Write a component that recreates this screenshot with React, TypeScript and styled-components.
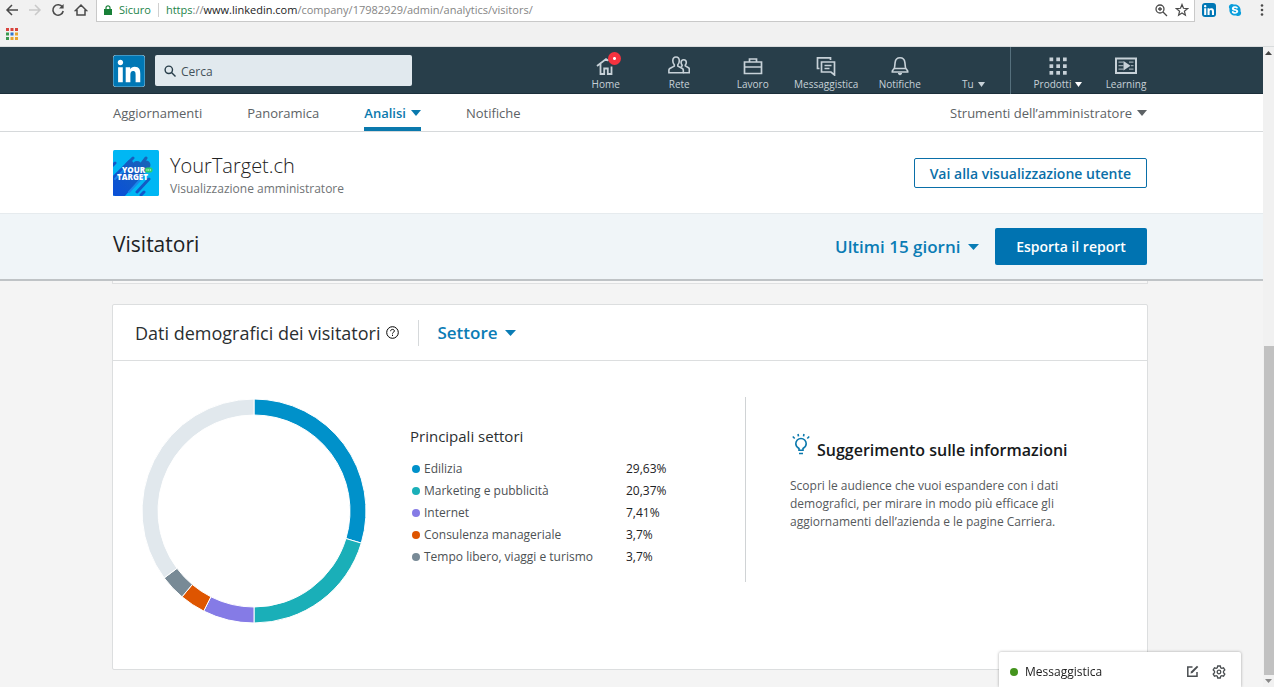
import React from "react";
import styled, { createGlobalStyle } from "styled-components";
import { FaLinkedin, FaSkype } from "react-icons/fa";

const GlobalStyle = createGlobalStyle`
  *, *::before, *::after { box-sizing: border-box; }
  html, body { margin: 0; background: #f4f4f4; }
  body, button, input, select { font-family: "Open Sans", "Noto Sans", sans-serif; }
  button, select { border: 0; background: none; padding: 0; cursor: pointer; }
  a { text-decoration: none; color: inherit; }
  h1, h2, h3, p { margin: 0; font-weight: 400; }
  svg { display: block; flex: none; }
`;

const Screen = styled.div`
  min-height: 100vh;
  display: flex;
  flex-direction: column;
`;

/* Browser chrome */
const Chrome = styled.div`
  background: #f1f1f1;
  height: 47px;
  border-bottom: 1px solid #d9dcdd;
`;
const ToolRow = styled.div`
  display: flex;
  align-items: stretch;
  height: 22px;
`;
const ToolButtons = styled.div`
  display: flex;
  align-items: center;
  gap: 9px;
  padding: 0 8px 2px 5px;
`;
const ToolButton = styled.button<{ $dim?: boolean }>`
  display: flex;
  color: ${(p) => (p.$dim ? "#c9c9c9" : "#4a4a4a")};
`;
const AddressBar = styled.div`
  flex: 1;
  display: flex;
  align-items: center;
  gap: 7px;
  padding: 0 5px 2px 7px;
  background: #fff;
  border: solid #c9c9c9;
  border-width: 0 1px 1px;
  font-size: 11px;
`;
const Secure = styled.span`
  color: #1e8449;
  padding-right: 7px;
  border-right: 1px solid #d0d0d0;
  line-height: 14px;
`;
const Url = styled.div`
  flex: 1;
  color: #858585;
  white-space: nowrap;
  i { font-style: normal; color: #1e8449; }
  b { font-weight: 400; color: #222; }
`;
const AddressTools = styled.div`
  display: flex;
  gap: 7px;
`;
const Extensions = styled.div`
  display: flex;
  align-items: center;
  gap: 12px;
  padding: 0 6px 2px 7px;
`;
const Bookmarks = styled.div`
  padding: 6px;
`;

/* Logo tile whose cut-out letters show the white ground */
const LogoTile = styled.a<{ $size: number }>`
  display: flex;
  align-items: center;
  justify-content: center;
  width: ${(p) => p.$size}px;
  height: ${(p) => p.$size}px;
  border-radius: 3px;
  overflow: hidden;
  background: #fff;
  color: #0077b5;
  svg {
    width: ${(p) => p.$size}px;
    height: ${(p) => p.$size + 4}px;
  }
`;
const SkypeTile = styled.span`
  display: flex;
  color: #0a9edc;
  background: radial-gradient(circle, #fff 5px, transparent 5px);
`;

const Viewport = styled.div`
  flex: 1;
  display: flex;
`;
const Page = styled.div`
  flex: 1;
  min-width: 0;
`;
const Scrollbar = styled.div`
  width: 11px;
  background: #f1f1f1;
  display: flex;
  flex-direction: column;
  align-items: center;
`;
const ScrollArrow = styled.span`
  display: flex;
  align-items: center;
  height: 12px;
`;
const ScrollSpace = styled.div`
  flex: 287;
`;
const ScrollThumb = styled.div`
  flex: 329;
  width: 10px;
  align-self: flex-end;
  background: #c1c1c1;
`;

const Row = styled.div`
  display: flex;
  align-items: center;
  padding: 0 116px 0 113px;
`;

/* Global navigation */
const GlobalNav = styled(Row).attrs({ as: "header" })`
  height: 47px;
  background: #283e4a;
  gap: 10px;
  box-shadow: inset 0 -1px #1b2f3a;
`;
const Search = styled.label`
  display: flex;
  align-items: center;
  gap: 5px;
  width: 257px;
  height: 31px;
  padding: 0 9px;
  border-radius: 2px;
  background: #e1e9ee;
  color: #283e4a;
  input {
    flex: 1;
    min-width: 0;
    border: 0;
    padding: 2px 0 0;
    background: none;
    outline: none;
    font-size: 12px;
    color: #44525b;
  }
  input::placeholder { color: #44525b; opacity: 1; }
`;
const NavMenu = styled.nav`
  margin-left: auto;
  align-self: stretch;
  display: flex;
`;
const NavMain = styled.div`
  width: 442px;
  display: grid;
  grid-template-columns: repeat(6, 1fr);
  border-right: 1px solid #56707d;
`;
const NavExtra = styled.div`
  display: grid;
  grid-template-columns: 94px 42px;
`;
const NavItem = styled.a`
  position: relative;
  display: flex;
  flex-direction: column;
  align-items: center;
  justify-content: flex-end;
  padding-bottom: 2px;
  color: #c7d1d8;
  font-size: 10px;
  line-height: 16px;
  white-space: nowrap;
`;
const Label = styled.span`
  display: flex;
  align-items: center;
  gap: 4px;
`;
const Badge = styled.span`
  position: absolute;
  top: 5px;
  left: 39px;
  width: 13px;
  height: 13px;
  border-radius: 50%;
  background: radial-gradient(circle, #fff 1px, #f5333f 2px);
`;

/* Company tabs */
const TabRow = styled(Row)`
  height: 38px;
  background: #fff;
  border-bottom: 1px solid #d6d9db;
  gap: 45px;
  align-items: stretch;
`;
const Tab = styled.button<{ $active?: boolean }>`
  display: flex;
  align-items: center;
  gap: 5px;
  font-size: 13px;
  color: ${(p) => (p.$active ? "#0a79ad" : "#5d6265")};
  font-weight: ${(p) => (p.$active ? 600 : 400)};
  border: solid ${(p) => (p.$active ? "#0a79ad" : "transparent")};
  border-width: 0 0 4px;
  padding-top: 5px;
  &:last-child { margin-left: auto; }
`;

const Company = styled(Row)`
  height: 81px;
  background: #fff;
  gap: 11px;
`;
const CompanyText = styled.div`
  padding-top: 4px;
`;
const CompanyName = styled.h1`
  font-size: 20px;
  line-height: 28px;
  font-weight: 300;
  color: #222;
`;
const CompanyRole = styled.p`
  font-size: 12px;
  line-height: 18px;
  color: #6f7375;
`;
const OutlineButton = styled.button`
  margin-left: auto;
  height: 30px;
  padding: 1px 15px 0;
  border: 1px solid #0a6fa8;
  border-radius: 2px;
  color: #0a6fa8;
  font-size: 14px;
  font-weight: 600;
`;

const ReportBar = styled(Row)`
  height: 68px;
  background: #f0f5f8;
  border-top: 1px solid #e6ebee;
  border-bottom: 2px solid #bfc3c6;
  gap: 16px;
`;
const ReportTitle = styled.h2`
  font-size: 21px;
  line-height: 28px;
  color: #1d2225;
  margin-right: auto;
  padding-bottom: 6px;
`;
const PickerBox = styled.label`
  display: flex;
  align-items: center;
  gap: 7px;
  color: #0a7cb5;
  select {
    appearance: none;
    color: inherit;
    font-size: 17px;
    font-weight: 600;
    line-height: 24px;
    outline: none;
  }
`;
const SolidButton = styled.button`
  height: 37px;
  width: 152px;
  background: #0073b1;
  border-radius: 2px;
  color: #fff;
  font-size: 14px;
  font-weight: 600;
`;

/* Demographics */
const Content = styled.main`
  padding: 0 115px 17px 112px;
`;
const PreviousCard = styled.div`
  height: 3px;
  background: #f8f8f8;
  border: 1px solid #dfe0e1;
  border-top: 0;
  margin-bottom: 20px;
`;
const Card = styled.section`
  background: #fff;
  border: 1px solid #dcdedf;
  border-radius: 2px;
`;
const CardHead = styled.div`
  display: flex;
  align-items: center;
  height: 56px;
  padding: 0 22px;
  border-bottom: 1px solid #dcdedf;
`;
const CardTitle = styled.h2`
  font-size: 18px;
  color: #2b2f31;
  margin-right: 6px;
`;
const HeadRule = styled.span`
  height: 26px;
  border-left: 1px solid #d6d9db;
  margin: 0 18px 0 19px;
`;
const CardBody = styled.div`
  display: flex;
  align-items: flex-start;
  padding: 36px 30px 46px 29px;
`;
const DonutBox = styled.div`
  padding: 2px 44px 0 0;
`;
const Sectors = styled.div`
  flex: 0 0 335px;
  padding-top: 27px;
`;
const SectorTitle = styled.h3`
  font-size: 15px;
  line-height: 24px;
  color: #2b2f31;
  margin-bottom: 10px;
`;
const SectorTable = styled.table`
  border-collapse: collapse;
  font-size: 12px;
  line-height: 22px;
  th { width: 216px; padding: 0; text-align: left; font-weight: 400; color: #4c5154; }
  td { padding: 0; color: #1d2225; }
`;
const Dot = styled.span<{ $color: string; $gap?: number }>`
  display: inline-block;
  width: 8px;
  height: 8px;
  margin: 0 ${(p) => p.$gap ?? 4}px 0 2px;
  border-radius: 50%;
  background: ${(p) => p.$color};
`;
const Tip = styled.aside`
  flex: 1;
  min-height: 185px;
  padding: 36px 0 0 44px;
  border-left: 1px solid #d0d3d5;
`;
const TipHead = styled.div`
  display: flex;
  align-items: flex-start;
  gap: 6px;
`;
const TipTitle = styled.h3`
  font-size: 16px;
  line-height: 24px;
  font-weight: 600;
  color: #16191b;
  padding-top: 5px;
`;
const TipText = styled.p`
  max-width: 282px;
  margin-top: 15px;
  font-size: 12px;
  line-height: 18px;
  color: #55595c;
`;

const ChatBar = styled.div`
  position: fixed;
  right: 33px;
  bottom: 0;
  width: 242px;
  height: 35px;
  display: flex;
  align-items: center;
  gap: 13px;
  padding: 4px 15px 0 9px;
  background: #fff;
  border-radius: 2px 2px 0 0;
  box-shadow: 0 0 3px rgba(0, 0, 0, 0.35);
  color: #4a4e51;
`;
const ChatLabel = styled.button`
  flex: 1;
  text-align: left;
  font-size: 12px;
  color: #222;
`;
const IconButton = styled.button`
  display: flex;
  color: inherit;
`;

function Caret({ w = 10, h = 6, color = "currentColor" }: { w?: number; h?: number; color?: string }) {
  return (
    <svg width={w} height={h} viewBox="0 0 10 6" preserveAspectRatio="none" aria-hidden="true">
      <path d="M0 0h10L5 6z" fill={color} />
    </svg>
  );
}

function Line({ size, vb = 24, sw = 2, children }: { size: number; vb?: number; sw?: number; children: React.ReactNode }) {
  return (
    <svg width={size} height={size} viewBox={`0 0 ${vb} ${vb}`} fill="none" stroke="currentColor" strokeWidth={sw} aria-hidden="true">
      {children}
    </svg>
  );
}

const icons = {
  home: (
    <Line size={22} vb={22} sw={1.8}>
      <path d="M2 12 11 5l2.500 1.800M5.500 10v10h3.700v-5.500h3.600V20h3.700v-7.500" />
    </Line>
  ),
  network: (
    <Line size={22} vb={22} sw={1.6}>
      <path d="M8 3c-2.200 0-3.200 1.600-3.200 3.800 0 1.700.6 3.100 1.500 4v1.300L1.800 14.500c-.6.4-.9.9-.9 1.600v2.600h14.400v-2.600c0-.7-.3-1.200-.9-1.600l-4.600-2.400v-1.300c.9-.9 1.500-2.300 1.500-4C11.300 4.600 10.200 3 8 3z" />
      <path d="M12.800 12.700l1.300-.8V11c-.7-.6-1-1.500-1-2.500 0-1.700 1-2.800 2.600-2.800s2.600 1.100 2.600 2.800c0 1-.4 1.900-1 2.500v.9l3.200 1.900c.5.3.8.8.8 1.400v3.500h-6" />
    </Line>
  ),
  jobs: (
    <Line size={22} vb={22} sw={1.7}>
      <path d="M2.500 8h17v11.500h-17zM7.500 8V5h7v3M2.500 13h17" />
    </Line>
  ),
  messages: (
    <Line size={22} vb={22} sw={1.7}>
      <path d="M4.500 14.500H2.500V3.800h13V6M6.500 8h13v13l-3.500-3H6.500z" />
      <path d="M9.500 11.500h7M9.500 14.500h5" strokeWidth="1.3" />
    </Line>
  ),
  bell: (
    <Line size={22} vb={22} sw={1.6}>
      <path d="M11 3.800c-3 0-4.600 2-4.900 4.800L5.600 13c-.1.900-.4 1.500-.9 2.100L3.300 17v1h15.400v-1l-1.400-1.900c-.5-.6-.8-1.200-.9-2.100l-.5-4.400C15.600 5.800 14 3.800 11 3.800zM5.500 14.500h11" />
      <path d="M9 19.500h4L11 21z" fill="currentColor" strokeWidth="1" />
    </Line>
  ),
  grid: (
    <svg width="22" height="22" viewBox="0 0 22 22" fill="currentColor" aria-hidden="true">
      {[3.5, 10.3, 17].map((y) => [2.5, 9.3, 16].map((x) => <rect key={`${x}-${y}`} x={x} y={y} width="3.7" height="3.7" />))}
    </svg>
  ),
  learning: (
    <svg width="24" height="22" viewBox="0 0 24 22" fill="none" stroke="currentColor" aria-hidden="true">
      <path d="M2 4.500h20v14.500H2z" strokeWidth="2" />
      <path d="M4.500 8.200h5M4.500 11.700h5M4.500 15.200h5M15 8.200h4.500M17 11.700h2.500M15 15.200h4.500" strokeWidth="1.3" opacity=".7" />
      <path d="M9.500 7v9.500l7-4.800z" fill="currentColor" stroke="none" />
    </svg>
  ),
};

function CompanyLogo() {
  return (
    <svg width="46" height="46" viewBox="0 0 46 46" role="img" aria-label="YourTarget">
      <defs>
        <clipPath id="tile"><rect width="46" height="46" rx="1.5" /></clipPath>
        <linearGradient id="streak" gradientUnits="userSpaceOnUse" x1="0" y1="46" x2="40" y2="6">
          <stop offset="0" stopColor="#0a4fd8" />
          <stop offset="1" stopColor="#1a66b4" />
        </linearGradient>
      </defs>
      <g clipPath="url(#tile)">
        <rect width="46" height="46" fill="#00b7f4" />
        <g stroke="url(#streak)" strokeLinecap="round">
          <path d="M-2 32 17 13" strokeWidth="6" />
          <path d="M-2 42 24 16" strokeWidth="10" />
          <path d="M6 46 33 15" strokeWidth="9" />
          <path d="M-1 16 2 13M14 14l6-6M27 16l6-8M24 42l12-13M28 45l3-3" strokeWidth="3" />
        </g>
        <path d="M16 42 30 27M2 29l9-9" stroke="#1b86ea" strokeWidth="2" strokeLinecap="round" />
        <rect x="32" y="17.5" width="7.5" height="5" rx="2" fill="#2fcf6c" />
        <path d="M33.500 20h4.500" stroke="#fff" strokeDasharray="1 .7" />
        <g fill="#fff" fontFamily="'Open Sans', sans-serif" fontWeight="800" fontSize="8">
          <text x="9" y="22.5">YOUR</text>
          <text x="4" y="29.5">TARGET</text>
        </g>
      </g>
    </svg>
  );
}

const sectors = [
  { name: "Edilizia", share: 29.63, text: "29,63%", color: "#0091ca" },
  { name: "Marketing e pubblicità", share: 20.37, text: "20,37%", color: "#1aafb8" },
  { name: "Internet", share: 7.41, text: "7,41%", color: "#857be6" },
  { name: "Consulenza manageriale", share: 3.7, text: "3,7%", color: "#de5500" },
  { name: "Tempo libero, viaggi e turismo", share: 3.7, text: "3,7%", color: "#788a96" },
];

function Donut() {
  const outer = 112;
  const inner = 96;
  const point = (pct: number, r: number) => {
    const a = (pct / 100) * 2 * Math.PI;
    return `${112 + r * Math.sin(a)} ${112 - r * Math.cos(a)}`;
  };
  const total = sectors.reduce((sum, s) => sum + s.share, 0);
  const slices = [...sectors.map((s) => ({ share: s.share, color: s.color })), { share: 100 - total, color: "#e1e8ed" }];
  let start = 0;
  return (
    <svg width="224" height="224" viewBox="0 0 224 224" role="img" aria-label="Principali settori">
      {slices.map((s) => {
        const end = start + s.share;
        const d = `M${point(start, outer)}A${outer} ${outer} 0 0 1 ${point(end, outer)}L${point(end, inner)}A${inner} ${inner} 0 0 0 ${point(start, inner)}Z`;
        start = end;
        return <path key={s.color} d={d} fill={s.color} stroke="#fff" strokeWidth="1" />;
      })}
    </svg>
  );
}

function Picker({ label, value }: { label: string; value: string }) {
  return (
    <PickerBox>
      <select aria-label={label} defaultValue={value}>
        <option>{value}</option>
      </select>
      <Caret w={11} h={6} />
    </PickerBox>
  );
}

const bookmarkColors = ["#d8433c", "#d8433c", "#d8433c", "#3a9a50", "#2f74d0", "#e7a430", "#3a9a50", "#e7a430", "#e7a430"];

export default function App() {
  return (
    <Screen>
      <GlobalStyle />
      <Chrome>
        <ToolRow>
          <ToolButtons>
            <ToolButton aria-label="Indietro">
              <Line size={14} vb={14} sw={1.5}><path d="M13 7H2M7 2 2 7l5 5" /></Line>
            </ToolButton>
            <ToolButton aria-label="Avanti" $dim>
              <Line size={14} vb={14} sw={1.5}><path d="M1 7h11M7 2l5 5-5 5" /></Line>
            </ToolButton>
            <ToolButton aria-label="Ricarica">
              <Line size={14} vb={14} sw={1.6}>
                <path d="M11.500 4.200A5.200 5.200 0 1 0 12.200 8" />
                <path d="M12.600 1v4.600H8z" fill="currentColor" stroke="none" />
              </Line>
            </ToolButton>
            <ToolButton aria-label="Pagina iniziale">
              <Line size={14} vb={14} sw={1.5}><path d="M1.500 7.500 7 2l5.500 5.500H11V12H3V7.500z" /></Line>
            </ToolButton>
          </ToolButtons>
          <AddressBar>
            <svg width="8" height="10" viewBox="0 0 8 10" aria-hidden="true">
              <path d="M0 4h8v6H0z" fill="#188038" />
              <path d="M2 4V2.800a2 2 0 0 1 4 0V4" fill="none" stroke="#188038" strokeWidth="1.2" />
            </svg>
            <Secure>Sicuro</Secure>
            <Url role="textbox" aria-label="Indirizzo">
              <i>https</i>://<b>www.linkedin.com</b>/company/17982929/admin/analytics/visitors/
            </Url>
            <AddressTools>
              <ToolButton aria-label="Zoom">
                <Line size={14} vb={14} sw={1.3}><circle cx="6" cy="6" r="4" /><path d="m9 9 4 4M4 6h4M6 4v4" /></Line>
              </ToolButton>
              <ToolButton aria-label="Aggiungi ai preferiti">
                <Line size={14} vb={14} sw={1.2}>
                  <path d="m7 1.500 1.500 3.800 4 .3-3.100 2.600 1 4L7 10l-3.400 2.200 1-4L1.500 5.600l4-.3z" />
                </Line>
              </ToolButton>
            </AddressTools>
          </AddressBar>
          <Extensions>
            <LogoTile $size={14} href="#" aria-label="LinkedIn"><FaLinkedin /></LogoTile>
            <SkypeTile><FaSkype size={14} /></SkypeTile>
            <ToolButton aria-label="Menu">
              <svg width="14" height="14" viewBox="0 0 14 14" fill="currentColor"><circle cx="8" cy="2.5" r="1.3" /><circle cx="8" cy="7" r="1.3" /><circle cx="8" cy="11.5" r="1.3" /></svg>
            </ToolButton>
          </Extensions>
        </ToolRow>
        <Bookmarks>
          <ToolButton aria-label="App">
            <svg width="12" height="12" viewBox="0 0 12 12">
              {bookmarkColors.map((c, i) => (
                <rect key={i} x={(i % 3) * 4.5} y={Math.floor(i / 3) * 4.5} width="3" height="3" fill={c} />
              ))}
            </svg>
          </ToolButton>
        </Bookmarks>
      </Chrome>

      <Viewport>
        <Page>
          <GlobalNav>
            <LogoTile $size={32} href="#" aria-label="LinkedIn"><FaLinkedin /></LogoTile>
            <Search>
              <Line size={12} vb={12} sw={1.4}><circle cx="4.8" cy="4.8" r="3.7" /><path d="m7.500 7.500 4 4" /></Line>
              <input type="search" placeholder="Cerca" aria-label="Cerca" />
            </Search>
            <NavMenu>
              <NavMain>
                <NavItem href="#">{icons.home}<Badge /><Label>Home</Label></NavItem>
                <NavItem href="#">{icons.network}<Label>Rete</Label></NavItem>
                <NavItem href="#">{icons.jobs}<Label>Lavoro</Label></NavItem>
                <NavItem href="#">{icons.messages}<Label>Messaggistica</Label></NavItem>
                <NavItem href="#">{icons.bell}<Label>Notifiche</Label></NavItem>
                <NavItem as="button"><Label>Tu<Caret w={7} h={5} /></Label></NavItem>
              </NavMain>
              <NavExtra>
                <NavItem as="button">{icons.grid}<Label>Prodotti<Caret w={7} h={5} color="#fff" /></Label></NavItem>
                <NavItem href="#">{icons.learning}<Label>Learning</Label></NavItem>
              </NavExtra>
            </NavMenu>
          </GlobalNav>

          <TabRow>
            <Tab>Aggiornamenti</Tab>
            <Tab>Panoramica</Tab>
            <Tab $active>Analisi<Caret /></Tab>
            <Tab>Notifiche</Tab>
            <Tab>Strumenti dell’amministratore<Caret /></Tab>
          </TabRow>

          <Company>
            <CompanyLogo />
            <CompanyText>
              <CompanyName>YourTarget.ch</CompanyName>
              <CompanyRole>Visualizzazione amministratore</CompanyRole>
            </CompanyText>
            <OutlineButton>Vai alla visualizzazione utente</OutlineButton>
          </Company>

          <ReportBar>
            <ReportTitle>Visitatori</ReportTitle>
            <Picker label="Periodo" value="Ultimi 15 giorni" />
            <SolidButton>Esporta il report</SolidButton>
          </ReportBar>

          <Content>
            <PreviousCard />
            <Card>
              <CardHead>
                <CardTitle>Dati demografici dei visitatori</CardTitle>
                <Line size={13} vb={13} sw={1}>
                  <circle cx="6.5" cy="6.5" r="5.8" />
                  <path d="M4.600 5.200c0-1.100.8-1.800 1.900-1.800s1.900.6 1.900 1.600c0 1.300-1.900 1.200-1.900 2.600M6.500 8.700V10" />
                </Line>
                <HeadRule />
                <Picker label="Dimensione" value="Settore" />
              </CardHead>
              <CardBody>
                <DonutBox><Donut /></DonutBox>
                <Sectors>
                  <SectorTitle>Principali settori</SectorTitle>
                  <SectorTable>
                    <tbody>
                      {sectors.map((s) => (
                        <tr key={s.name}>
                          <th scope="row"><Dot $color={s.color} />{s.name}</th>
                          <td>{s.text}</td>
                        </tr>
                      ))}
                    </tbody>
                  </SectorTable>
                </Sectors>
                <Tip>
                  <TipHead>
                    <svg width="21" height="23" viewBox="0 0 21 23" fill="none" stroke="#0a78ad" strokeWidth="1.6" aria-hidden="true">
                      <path d="M9 17.200v-1.700C7 14.300 5.800 12.700 5.800 10.700a5.200 5.200 0 0 1 10.400 0c0 2-1.200 3.600-3.200 4.800v1.700zM9 20.500h4" />
                      <path d="M8.500 3.300 8 1M13.500 3.300 14 1M4.700 5.500 2.800 3.500M17.300 5.500l1.900-2" />
                    </svg>
                    <TipTitle>Suggerimento sulle informazioni</TipTitle>
                  </TipHead>
                  <TipText>
                    Scopri le audience che vuoi espandere con i dati demografici, per mirare in modo più efficace gli
                    aggiornamenti dell’azienda e le pagine Carriera.
                  </TipText>
                </Tip>
              </CardBody>
            </Card>
          </Content>
        </Page>
        <Scrollbar aria-hidden="true">
          <ScrollArrow><svg width="7" height="4" viewBox="0 0 7 4"><path d="M0 4h7L3.500 0z" fill="#444" /></svg></ScrollArrow>
          <ScrollSpace />
          <ScrollThumb />
          <ScrollArrow><svg width="7" height="4" viewBox="0 0 7 4"><path d="M0 0h7L3.500 4z" fill="#888" /></svg></ScrollArrow>
        </Scrollbar>
      </Viewport>

      <ChatBar>
        <ChatLabel><Dot $color="#44941d" $gap={7} />Messaggistica</ChatLabel>
        <IconButton aria-label="Nuovo messaggio">
          <Line size={13} vb={13} sw={1.5}>
            <path d="M6.500 2H1.800v9.200H11V7" />
            <path d="M4.500 8.500 5 6.500 11 .8 12.300 2 6.500 8z" fill="currentColor" stroke="none" />
          </Line>
        </IconButton>
        <IconButton aria-label="Impostazioni">
          <Line size={14} vb={14} sw={1.3}>
            <path d="M5.700 1h2.600l.4 1.700 1.100.6 1.700-.5 1.300 2.200L11.500 6.200v1.600l1.300 1.200-1.300 2.200-1.700-.5-1.100.6-.4 1.700H5.700l-.4-1.700-1.100-.6-1.700.5L1.200 9l1.300-1.200V6.200L1.200 5l1.300-2.200 1.700.5 1.100-.6z" />
            <circle cx="7" cy="7" r="1.8" />
          </Line>
        </IconButton>
      </ChatBar>
    </Screen>
  );
}
